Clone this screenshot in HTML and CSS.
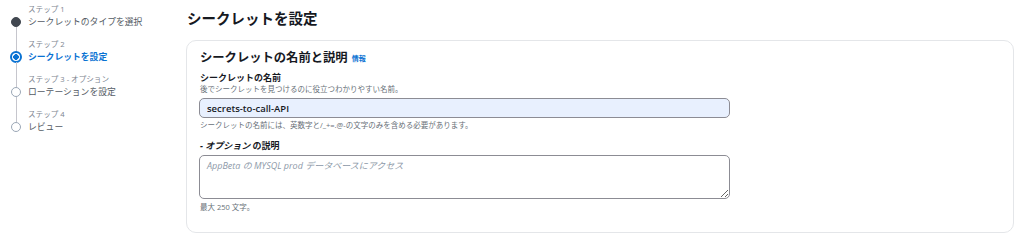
FILE: index.html
```html
<!DOCTYPE html>
<html lang="ja">
<head>
  <meta charset="UTF-8">
  <meta name="viewport" content="width=device-width, initial-scale=1.0">
  <title>シークレットを設定</title>
  <link rel="stylesheet" href="styles.css">
</head>
<body>
  <div class="layout">
    <nav class="steps">
      <div class="step done">
        <div class="marker"><span class="line"></span><span class="dot"></span><span class="tail"></span></div>
        <div class="step-num">ステップ 1</div>
        <div class="step-title">シークレットのタイプを選択</div>
      </div>
      <div class="step current">
        <div class="marker"><span class="line"></span><span class="dot"></span><span class="tail"></span></div>
        <div class="step-num">ステップ 2</div>
        <div class="step-title">シークレットを設定</div>
      </div>
      <div class="step">
        <div class="marker"><span class="line"></span><span class="dot"></span><span class="tail"></span></div>
        <div class="step-num">ステップ 3 - オプション</div>
        <div class="step-title">ローテーションを設定</div>
      </div>
      <div class="step">
        <div class="marker"><span class="line"></span><span class="dot"></span><span class="tail"></span></div>
        <div class="step-num">ステップ 4</div>
        <div class="step-title">レビュー</div>
      </div>
    </nav>

    <main class="main">
      <h1>シークレットを設定</h1>
      <section class="card">
        <h2>シークレットの名前と説明 <a class="info" href="#">情報</a></h2>

        <div class="field">
          <label for="secretName">シークレットの名前</label>
          <div class="desc">後でシークレットを見つけるのに役立つわかりやすい名前。</div>
          <input type="text" id="secretName" value="secrets-to-call-API">
          <div class="hint">シークレットの名前には、英数字と/_+=.@-の文字のみを含める必要があります。</div>
        </div>

        <div class="field">
          <label for="secretDesc"><i>- オプション</i> の説明</label>
          <textarea id="secretDesc" placeholder="AppBeta の MYSQL prod データベースにアクセス"></textarea>
          <div class="hint">最大 250 文字。</div>
        </div>
      </section>
    </main>
  </div>
</body>
</html>
```

FILE: styles.css
```css
body {
  margin: 0;
  font-family: "Open Sans", "Noto Sans CJK JP", sans-serif;
  color: #16191f;
  background: #fff;
}
.layout {
  display: flex;
}

/* steps sidebar */
.steps {
  width: 186px;
  flex-shrink: 0;
  padding: 3px 0 0 10px;
  box-sizing: border-box;
}
.step {
  display: grid;
  grid-template-columns: 12px 1fr;
  grid-template-rows: 21px 14px;
  column-gap: 6px;
}
.step:first-child {
  grid-template-rows: 12px 14px;
}
.step-num {
  grid-column: 2;
  grid-row: 1;
  align-self: end;
  font-size: 7.6px;
  line-height: 12px;
  color: #7d8590;
}
.step-title {
  grid-column: 2;
  grid-row: 2;
  font-size: 8.8px;
  line-height: 14px;
  color: #545b64;
}
.marker {
  grid-column: 1;
  grid-row: 1 / 3;
  display: flex;
  flex-direction: column;
  align-items: center;
}
.marker .line {
  flex: 1;
  width: 1px;
  background: #c6c6cd;
}
.marker .tail {
  height: 2px;
  width: 1px;
  background: #c6c6cd;
}
.step:first-child .line,
.step:last-child .tail {
  background: transparent;
}
.marker .dot {
  width: 10px;
  height: 10px;
  border-radius: 50%;
  box-sizing: border-box;
  border: 1.3px solid #9ba7b6;
  background: #fff;
}
.step.done .dot {
  background: #414750;
  border-color: #414750;
}
.step.current .marker .dot {
  width: 12px;
  height: 12px;
  margin: -1px 0;
  border: 2px solid #0972d3;
  background: radial-gradient(circle, #0972d3 0 2.6px, #fff 3px);
}
.step.current .step-title {
  color: #0972d3;
  font-weight: bold;
}

/* main content */
.main {
  flex: 1;
  padding: 8px 10px 0 0;
}
h1 {
  margin: 0 0 10px 1px;
  font-size: 14.5px;
  line-height: 22px;
  font-weight: bold;
}
.card {
  border: 1px solid #e4e6e9;
  border-radius: 10px;
  padding: 8px 12px 20px 13px;
  height: 193px;
  box-sizing: border-box;
}
h2 {
  margin: 0 0 4px 0;
  font-size: 12.3px;
  line-height: 18px;
  font-weight: bold;
}
.info {
  font-size: 7px;
  color: #0972d3;
  text-decoration: none;
  font-weight: bold;
  margin-left: 1px;
  vertical-align: 1px;
}
.field {
  display: flex;
  flex-direction: column;
  align-items: flex-start;
}
.field + .field {
  margin-top: 9px;
}
label {
  font-size: 9px;
  line-height: 12px;
  font-weight: bold;
}
.desc, .hint {
  font-size: 7.5px;
  line-height: 11px;
  color: #687078;
}
input, textarea {
  width: 531px;
  margin-left: -1px;
  border: 1px solid #8c8c94;
  border-radius: 5px;
  box-sizing: border-box;
  font-family: "Open Sans", "Noto Sans CJK JP", sans-serif;
  color: #16191f;
}
input {
  margin-top: 3px;
  height: 20px;
  padding: 0 7px;
  font-size: 9.5px;
  font-weight: 600;
  background: #e8f0fe;
}
textarea {
  margin-top: 3px;
  height: 44px;
  padding: 3px 7px;
  font-size: 9px;
  line-height: 13px;
  background: #fff;
}
textarea::placeholder {
  font-style: italic;
  color: #8d99a8;
}
.field input + .hint {
  margin-top: 2px;
}
textarea + .hint {
  margin-top: 3px;
}
```
